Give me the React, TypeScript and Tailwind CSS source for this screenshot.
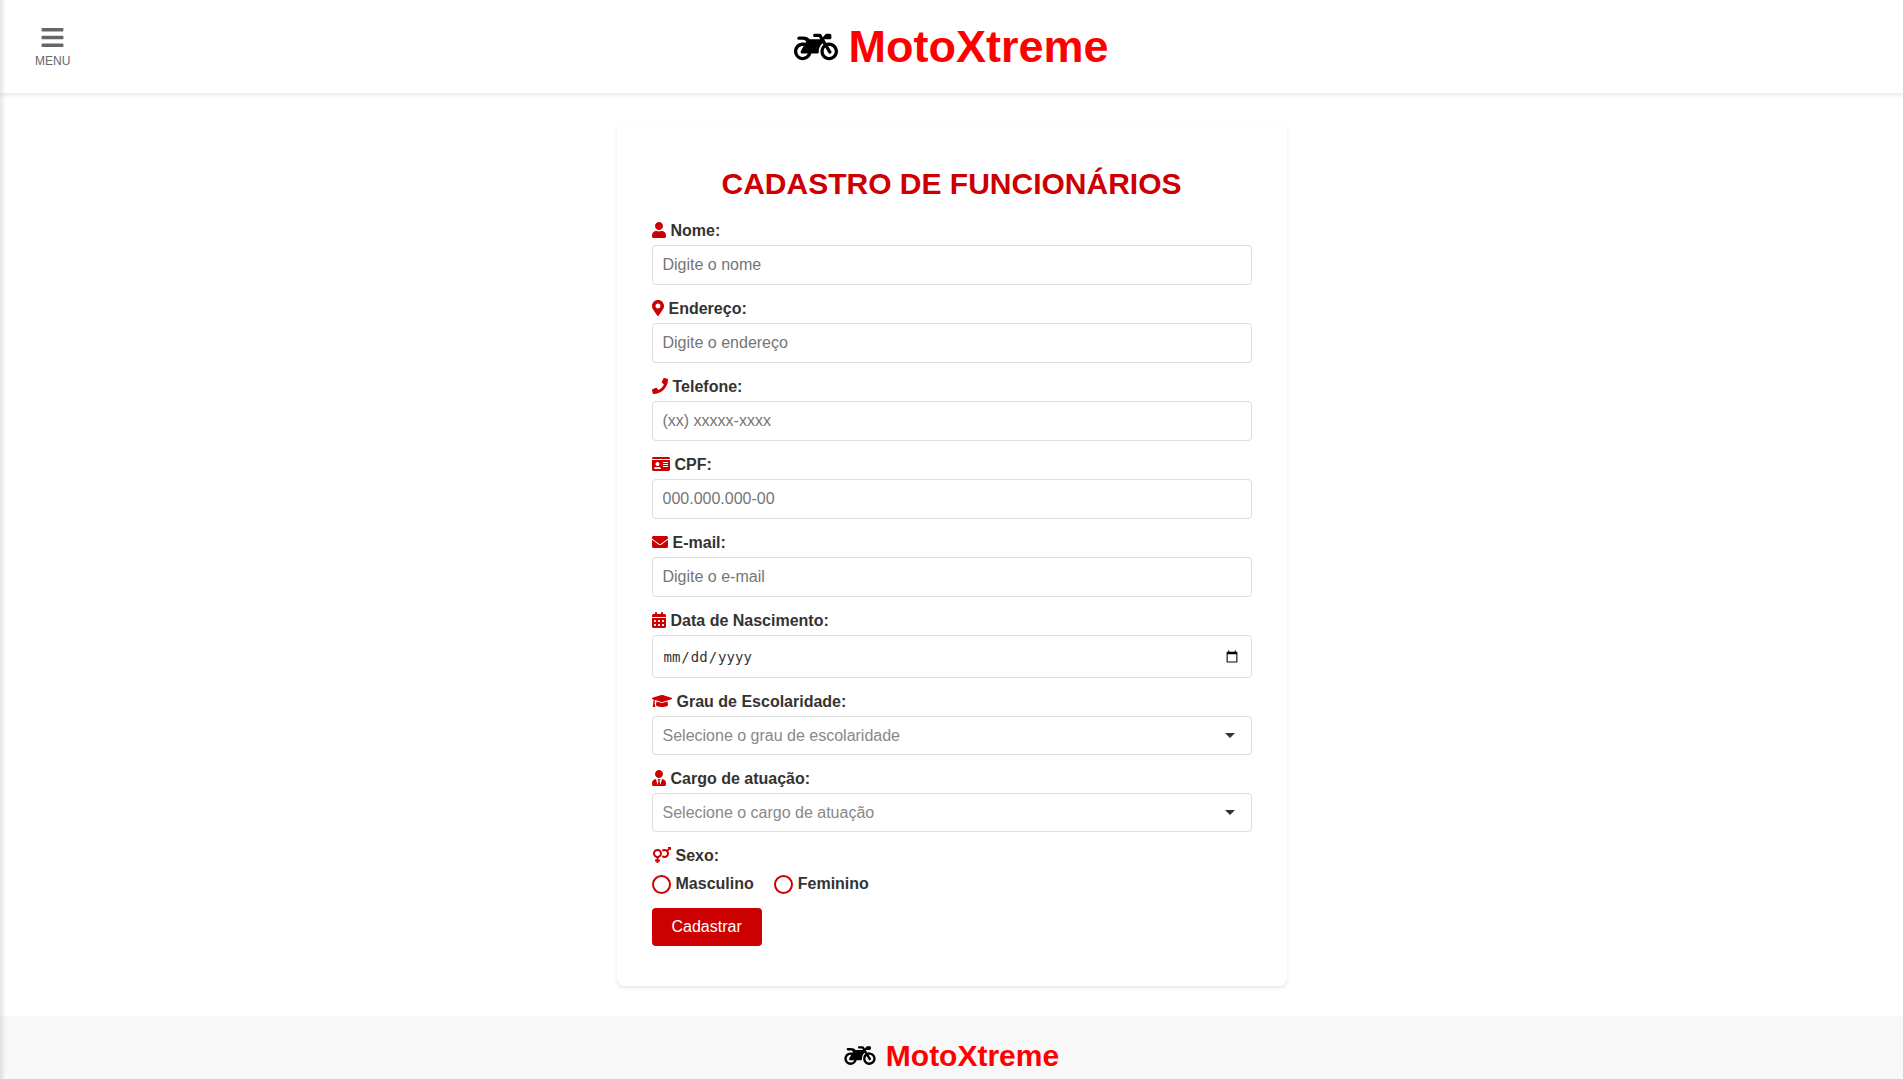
import type { ReactNode } from "react";
import {
  FaUser,
  FaPhone,
  FaIdCard,
  FaEnvelope,
  FaGraduationCap,
  FaUserTie,
  FaMotorcycle,
  FaBars,
  FaMapMarkerAlt,
  FaVenusMars,
} from "react-icons/fa";
import { FaCalendarDays } from "react-icons/fa6";

const box = "w-full rounded border border-[#dddddd] bg-white px-2.5 text-[#333333]";

function Field({ id, label, icon, children }: { id: string; label: string; icon: ReactNode; children: ReactNode }) {
  return (
    <div className="mb-[15px]">
      <label htmlFor={id} className="mb-[5px] flex h-[18px] items-start gap-[5px] font-bold text-[#333333]">
        <span className="text-[#cc0000]">{icon}</span>
        {label}
      </label>
      {children}
    </div>
  );
}

function TextField({ id, label, icon, placeholder, type = "text" }: { id: string; label: string; icon: ReactNode; placeholder: string; type?: string }) {
  return (
    <Field id={id} label={label} icon={icon}>
      <input id={id} type={type} placeholder={placeholder} className={`${box} block h-10 text-base placeholder:text-[#757575]`} />
    </Field>
  );
}

function SelectField({ id, label, icon, placeholder, options }: { id: string; label: string; icon: ReactNode; placeholder: string; options: string[] }) {
  return (
    <Field id={id} label={label} icon={icon}>
      <div className="relative">
        <select id={id} defaultValue="" className={`${box} block h-[39px] appearance-none text-base invalid:text-[#888888]`} required>
          <option value="" disabled>{placeholder}</option>
          {options.map((o) => (
            <option key={o}>{o}</option>
          ))}
        </select>
        <svg viewBox="0 0 10 5" className="pointer-events-none absolute top-[17px] right-[17px] h-[5px] w-2.5 fill-[#333333]">
          <path d="M0 0h10L5 5z" />
        </svg>
      </div>
    </Field>
  );
}

function Radio({ label }: { label: string }) {
  return (
    <label className="flex items-start gap-[5px] font-bold text-[#333333]">
      <input type="radio" name="sexo" className="size-[19px] appearance-none rounded-full border-2 border-[#cc0000] checked:bg-[#cc0000]" />
      {label}
    </label>
  );
}

export default function App() {
  return (
    <div className="relative min-h-screen bg-white font-['Liberation_Sans',Arial,sans-serif] text-base leading-[18px]">
      <div className="pointer-events-none absolute inset-y-0 left-0 z-10 w-1.5 bg-linear-to-r from-black/10 to-transparent" />
      <header className="relative flex h-[93px] items-center justify-center shadow-[0_2px_4px_rgba(0,0,0,0.1)]">
        <button type="button" className="absolute top-[25px] left-[35px] flex flex-col items-center text-xs leading-[14px] text-[#666666]">
          <FaBars className="mb-1 size-[25px]" />
          MENU
        </button>
        <a href="#" className="flex items-center gap-2.5 text-[45px] leading-[52px] font-bold text-[#ff0000]">
          <FaMotorcycle className="h-9 w-[44px] text-black" />
          MotoXtreme
        </a>
      </header>

      <main className="px-4 py-[30px]">
        <form className="mx-auto max-w-[670px] rounded-lg bg-white px-[35px] pt-[43px] pb-10 shadow-[0_2px_4px_rgba(0,0,0,0.1)]">
          <h1 className="mb-[21px] text-center text-[30px] leading-[35px] font-bold text-[#cc0000]">CADASTRO DE FUNCIONÁRIOS</h1>
          <TextField id="nome" label="Nome:" icon={<FaUser className="h-4 w-3.5" />} placeholder="Digite o nome" />
          <TextField id="endereco" label="Endereço:" icon={<FaMapMarkerAlt className="h-4 w-3" />} placeholder="Digite o endereço" />
          <TextField id="telefone" label="Telefone:" icon={<FaPhone className="size-4" />} placeholder="(xx) xxxxx-xxxx" type="tel" />
          <TextField id="cpf" label="CPF:" icon={<FaIdCard className="h-4 w-[18px]" />} placeholder="000.000.000-00" />
          <TextField id="email" label="E-mail:" icon={<FaEnvelope className="size-4" />} placeholder="Digite o e-mail" type="email" />
          <Field id="nascimento" label="Data de Nascimento:" icon={<FaCalendarDays className="h-4 w-3.5" />}>
            <input id="nascimento" type="date" className={`${box} block h-[43px] font-['DejaVu_Sans_Mono',monospace] text-sm`} />
          </Field>
          <SelectField
            id="escolaridade"
            label="Grau de Escolaridade:"
            icon={<FaGraduationCap className="h-4 w-5" />}
            placeholder="Selecione o grau de escolaridade"
            options={["Ensino Fundamental", "Ensino Médio", "Ensino Superior"]}
          />
          <SelectField
            id="cargo"
            label="Cargo de atuação:"
            icon={<FaUserTie className="h-4 w-3.5" />}
            placeholder="Selecione o cargo de atuação"
            options={["Vendedor", "Mecânico", "Gerente"]}
          />
          <fieldset>
            <legend className="flex h-[18px] items-start gap-1 font-bold text-[#333333]">
              <FaVenusMars className="h-4 w-5 text-[#cc0000]" />
              Sexo:
            </legend>
            <div className="mt-2.5 flex gap-5">
              <Radio label="Masculino" />
              <Radio label="Feminino" />
            </div>
          </fieldset>
          <button type="submit" className="mt-3.5 block h-[38px] rounded bg-[#cc0000] px-5 text-base text-white">Cadastrar</button>
        </form>
      </main>

      <footer className="flex h-[63px] justify-center bg-[#f8f8f8] pt-[21px]">
        <a href="#" className="flex h-[37px] items-center gap-2.5 text-[30px] font-bold text-[#ff0000]">
          <FaMotorcycle className="h-[25px] w-8 text-black" />
          MotoXtreme
        </a>
      </footer>
    </div>
  );
}
